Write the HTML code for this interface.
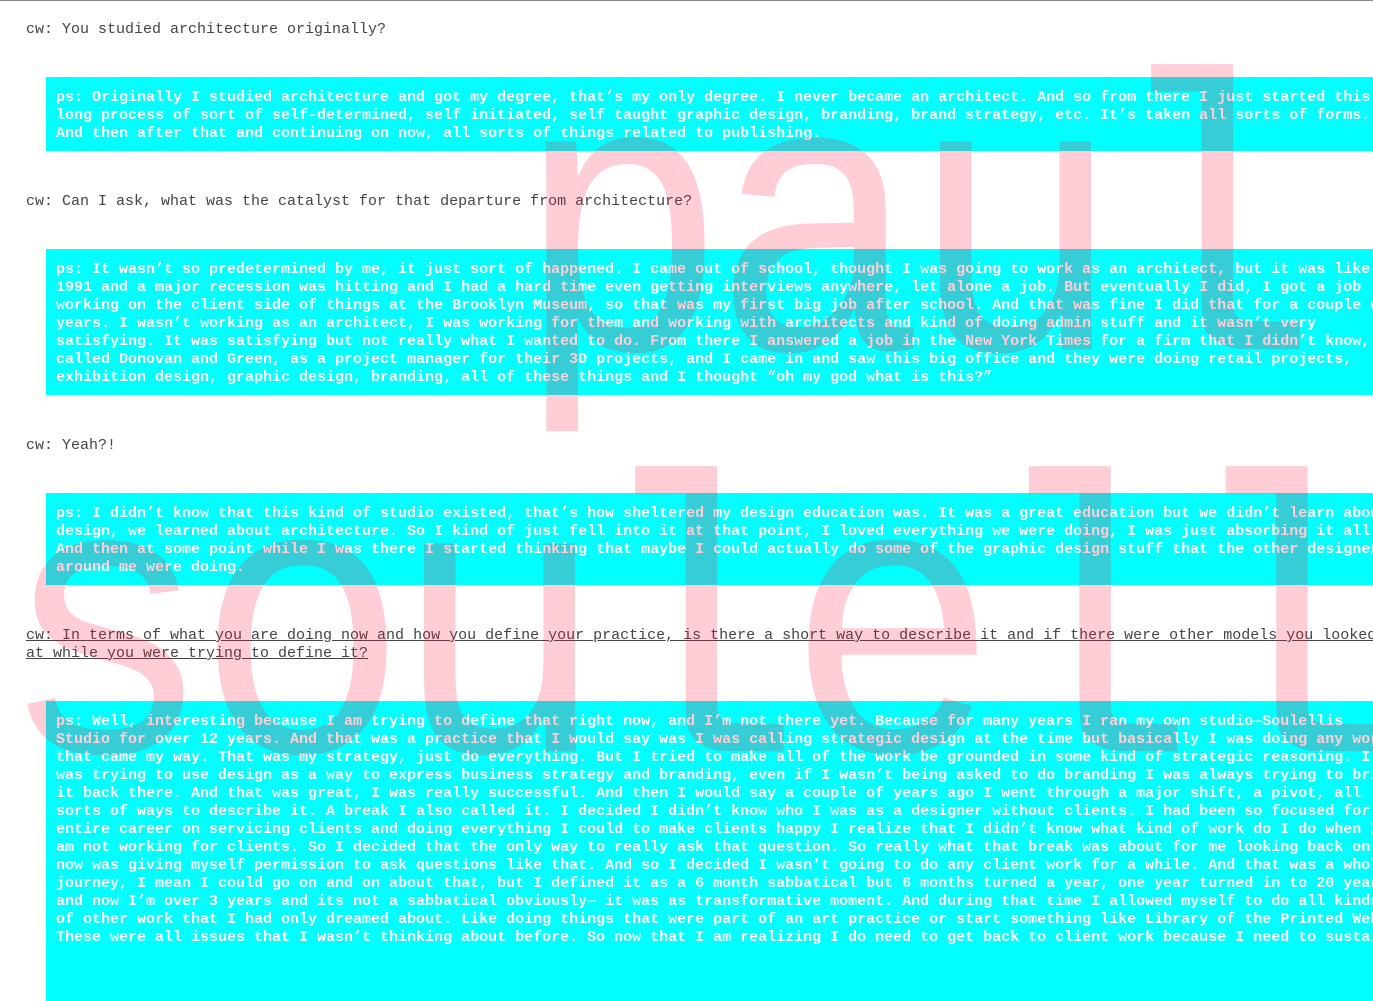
<!DOCTYPE html>
<html><head><meta charset="utf-8"><style>
html,body{margin:0;padding:0;}
body{width:1373px;height:936px;overflow:hidden;position:relative;background:#fff;border-top:1px solid #8a8a8a;box-sizing:border-box;font-family:"Liberation Mono",monospace;font-size:15px;line-height:18px;}
.cw{position:absolute;left:26px;color:#444;white-space:pre;}
.cw.u{text-decoration:underline;}
.ps{position:absolute;left:46px;width:1400px;background:#00ffff;color:#fff;font-weight:bold;white-space:pre;padding:12px 0 8px 10px;box-sizing:border-box;}
.big{position:absolute;font-family:"Liberation Mono",monospace;font-size:358px;line-height:400px;letter-spacing:-18px;color:rgba(255,20,60,0.21);white-space:pre;pointer-events:none;z-index:5;transform:scaleY(1.1);transform-origin:0 0;}
</style></head><body>
<div class="cw" style="top:20px">cw: You studied architecture originally?</div>
<div class="ps" style="top:76px;height:74px">ps: Originally I studied architecture and got my degree, that’s my only degree. I never became an architect. And so from there I just started this
long process of sort of self-determined, self initiated, self taught graphic design, branding, brand strategy, etc. It’s taken all sorts of forms.
And then after that and continuing on now, all sorts of things related to publishing.</div>
<div class="cw" style="top:192px">cw: Can I ask, what was the catalyst for that departure from architecture?</div>
<div class="ps" style="top:248px;height:146px">ps: It wasn’t so predetermined by me, it just sort of happened. I came out of school, thought I was going to work as an architect, but it was like
1991 and a major recession was hitting and I had a hard time even getting interviews anywhere, let alone a job. But eventually I did, I got a job
working on the client side of things at the Brooklyn Museum, so that was my first big job after school. And that was fine I did that for a couple of
years. I wasn’t working as an architect, I was working for them and working with architects and kind of doing admin stuff and it wasn’t very
satisfying. It was satisfying but not really what I wanted to do. From there I answered a job in the New York Times for a firm that I didn’t know,
called Donovan and Green, as a project manager for their 3D projects, and I came in and saw this big office and they were doing retail projects,
exhibition design, graphic design, branding, all of these things and I thought “oh my god what is this?”</div>
<div class="cw" style="top:436px">cw: Yeah?!</div>
<div class="ps" style="top:492px;height:92px">ps: I didn’t know that this kind of studio existed, that’s how sheltered my design education was. It was a great education but we didn’t learn about
design, we learned about architecture. So I kind of just fell into it at that point, I loved everything we were doing, I was just absorbing it all.
And then at some point while I was there I started thinking that maybe I could actually do some of the graphic design stuff that the other designers
around me were doing.</div>
<div class="cw u" style="top:626px">cw: In terms of what you are doing now and how you define your practice, is there a short way to describe it and if there were other models you looked
at while you were trying to define it?</div>
<div class="ps" style="top:700px;height:300px">ps: Well, interesting because I am trying to define that right now, and I’m not there yet. Because for many years I ran my own studio—Soulellis
Studio for over 12 years. And that was a practice that I would say was I was calling strategic design at the time but basically I was doing any work
that came my way. That was my strategy, just do everything. But I tried to make all of the work be grounded in some kind of strategic reasoning. I
was trying to use design as a way to express business strategy and branding, even if I wasn’t being asked to do branding I was always trying to bring
it back there. And that was great, I was really successful. And then I would say a couple of years ago I went through a major shift, a pivot, all
sorts of ways to describe it. A break I also called it. I decided I didn’t know who I was as a designer without clients. I had been so focused for my
entire career on servicing clients and doing everything I could to make clients happy I realize that I didn’t know what kind of work do I do when I
am not working for clients. So I decided that the only way to really ask that question. So really what that break was about for me looking back on it
now was giving myself permission to ask questions like that. And so I decided I wasn't going to do any client work for a while. And that was a whole
journey, I mean I could go on and on about that, but I defined it as a 6 month sabbatical but 6 months turned a year, one year turned in to 20 years
and now I’m over 3 years and its not a sabbatical obviously— it was as transformative moment. And during that time I allowed myself to do all kinds
of other work that I had only dreamed about. Like doing things that were part of an art practice or start something like Library of the Printed Web.
These were all issues that I wasn’t thinking about before. So now that I am realizing I do need to get back to client work because I need to sustain</div>
<div class="big" style="left:514px;top:24px">paul</div>
<div class="big" style="left:-2px;top:426px">soulellis</div>
</body></html>
